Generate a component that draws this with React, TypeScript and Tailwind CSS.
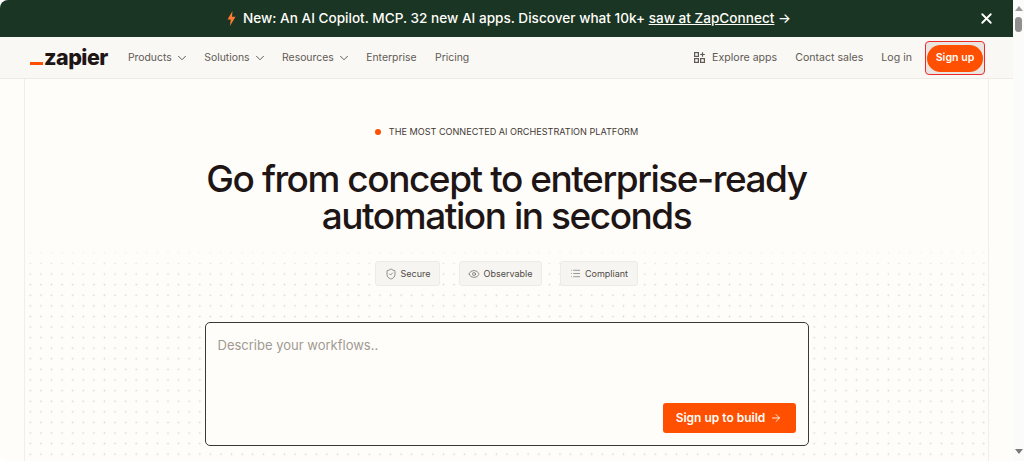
import { ChevronDown, Eye, List, ShieldCheck, X, ArrowRight } from "lucide-react";

function NavItem({ label, caret, extra }: { label: string; caret?: boolean; extra?: string }) {
  return (
    <a className={`flex items-center gap-[3px] text-[10.4px] text-[#5f5a54] ${extra ?? ""}`}>
      {label}
      {caret && <ChevronDown size={14} strokeWidth={1.7} />}
    </a>
  );
}

function Pill({ icon, label, width }: { icon: React.ReactNode; label: string; width: string }) {
  return (
    <div className={`flex h-[25px] items-center justify-center gap-[4px] rounded-[3px] border border-[#eeebe5] bg-[#f7f5f1] text-[9px] text-[#4f4a45] ${width}`}>
      {icon}
      {label}
    </div>
  );
}

export default function App() {
  return (
    <div className="flex h-[461px] w-[1024px] overflow-hidden rounded-l-[8px] bg-[#fffdf9] font-['Inter',sans-serif]">
      <div className="flex w-[1013px] flex-col">
        <div className="relative flex h-[37px] items-center justify-center bg-[#1a3524] pl-[5px] text-[13.6px] font-medium text-[#fffdf9]">
          <svg width="9" height="15" viewBox="0 0 9 15" className="mr-[7px]">
            <path d="M5.5 0 L0.5 8.5 L3.7 8.5 L3 15 L8.5 5.8 L5 5.8 Z" fill="#ff7a33" />
          </svg>
          <span>
            New: An AI Copilot. MCP. 32 new AI apps. Discover what 10k+ <span className="underline">saw at ZapConnect</span> →
          </span>
          <X size={17} strokeWidth={2.6} className="absolute right-[18px] top-[10px] text-white" />
        </div>
        <div className="flex h-[42px] items-center justify-between border-b border-[#eeebe5] bg-[#faf8f5] pl-[30px] pr-[28px] pt-[1px]">
          <div className="flex items-center">
            <div className="mr-[20px] flex items-end">
              <span className="mb-[4px] h-[3px] w-[13px] bg-[#ff4f00]" />
              <span className="ml-[1px] text-[21.5px] font-extrabold leading-none tracking-[-0.5px] text-[#201515]">zapier</span>
            </div>
            <div className="flex items-center gap-[15.5px]">
              <NavItem label="Products" caret />
              <NavItem label="Solutions" caret />
              <NavItem label="Resources" caret />
              <NavItem label="Enterprise" />
              <NavItem label="Pricing" extra="ml-[3px]" />
            </div>
          </div>
          <div className="flex items-center">
            <div className="flex items-center gap-[18px]">
              <a className="flex items-center gap-[7px] text-[10.6px] text-[#5f5a54]">
                <svg width="11" height="11" viewBox="0 0 11 11" fill="none" stroke="#5f5a54" strokeWidth="1.2">
                  <rect x="0.6" y="0.6" width="3.8" height="3.8" />
                  <rect x="0.6" y="6.6" width="3.8" height="3.8" />
                  <rect x="6.6" y="6.6" width="3.8" height="3.8" />
                  <path d="M8.5 0.2 V4.8 M6.2 2.5 H10.8" />
                </svg>
                Explore apps
              </a>
              <a className="text-[10.6px] text-[#5f5a54]">Contact sales</a>
              <a className="text-[10.6px] text-[#5f5a54]">Log in</a>
            </div>
            <div className="ml-[13px] rounded-[4px] border-[1.5px] border-[#ee2b2b] bg-[#e9e6e1] px-[1px] py-[2.5px]">
              <button className="block h-[27px] w-[56px] rounded-full bg-[#ff4f00] text-[10.6px] font-semibold text-[#fffdf9]">Sign up</button>
            </div>
          </div>
        </div>
        <main className="mx-[24px] flex flex-1 flex-col border-x border-[#f1eee9] bg-[#fffdf9]">
          <div className="flex h-[161px] flex-col items-center">
            <div className="mt-[46px] flex items-center gap-[8px] text-[9.1px] text-[#3f3a36]">
              <span className="h-[6px] w-[6px] rounded-full bg-[#ff4f00]" />
              THE MOST CONNECTED AI ORCHESTRATION PLATFORM
            </div>
            <h1 className="mt-[21px] text-center text-[37px] font-medium leading-[37.5px] tracking-[-1.45px] text-[#201515]">
              Go from concept to enterprise-ready
              <br />
              automation in seconds
            </h1>
          </div>
          <div className="flex flex-1 flex-col items-center bg-[linear-gradient(to_bottom,#fffdf9,transparent_40px),radial-gradient(circle,#dedad3_0.8px,transparent_1.1px)] bg-[size:100%_100%,10.6px_10.6px] bg-[position:0_0,0_-3px]">
            <div className="mt-[21px] flex gap-[18.5px]">
              <Pill width="w-[65px]" icon={<ShieldCheck size={12} strokeWidth={1.2} />} label="Secure" />
              <Pill width="w-[83px]" icon={<Eye size={12} strokeWidth={1.2} />} label="Observable" />
              <Pill width="w-[78px]" icon={<List size={11} strokeWidth={1.2} />} label="Compliant" />
            </div>
            <div className="mt-[36px] flex h-[124px] w-[604px] flex-col justify-between rounded-[5px] border border-[#3d3833] bg-[#fffdf9] pb-[12px] pl-[12px] pr-[12px] pt-[13px]">
              <div className="text-[13px] text-[#a09a92]">Describe your workflows..</div>
              <div className="flex justify-end">
                <button className="flex h-[30px] w-[133px] items-center justify-center gap-[5px] rounded-[3px] bg-[#ff4f00] text-[12px] font-semibold text-[#fffdf9]">
                  Sign up to build
                  <ArrowRight size={12} strokeWidth={1.8} />
                </button>
              </div>
            </div>
          </div>
        </main>
      </div>
      <div className="flex w-[11px] flex-col items-center bg-[#fbfbf9] pt-[6px]">
        <span className="h-0 w-0 border-x-[4px] border-b-[5px] border-x-transparent border-b-[#9a9a9a]" />
        <span className="mt-[6px] h-[15px] w-[7px] rounded-full bg-[#8f8f8f]" />
        <span className="mb-[7px] mt-auto h-0 w-0 border-x-[4px] border-t-[5px] border-x-transparent border-t-[#7a7a7a]" />
      </div>
    </div>
  );
}
